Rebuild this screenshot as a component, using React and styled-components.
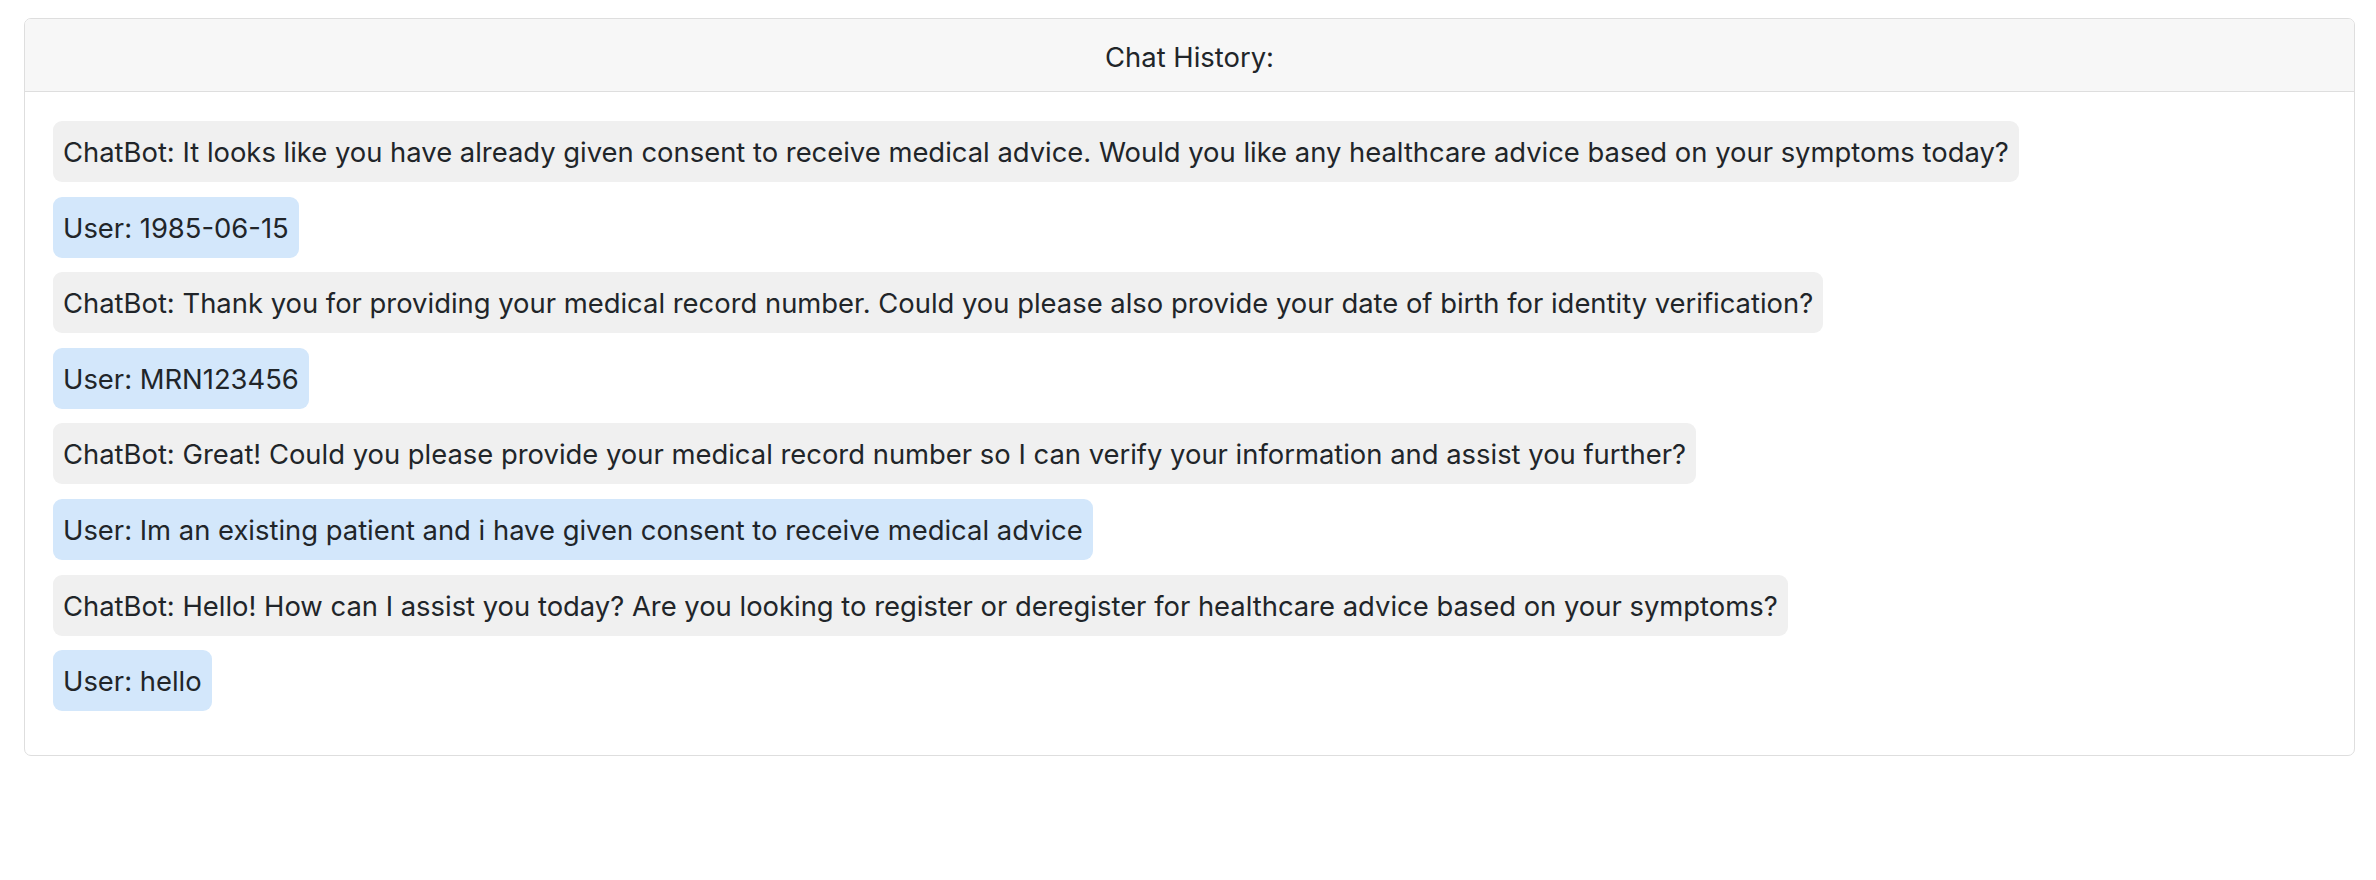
import React from "react";
import styled, { createGlobalStyle } from "styled-components";

const GlobalStyle = createGlobalStyle`
  body {
    margin: 0;
    background: #ffffff;
    font-family: "Inter", "Liberation Sans", sans-serif;
    color: #212529;
  }
`;

const Page = styled.div`
  padding: 18px 21px 0 24px;
`;

const Card = styled.div`
  border: 1px solid #dedede;
  border-radius: 7px;
  overflow: hidden;
  background: #ffffff;
`;

const CardHeader = styled.div`
  height: 73px;
  display: flex;
  align-items: center;
  justify-content: center;
  background: #f7f7f7;
  border-bottom: 1px solid #dedede;
  font-size: 27.4px;
  padding-top: 3px;
  box-sizing: border-box;
`;

const CardBody = styled.div`
  display: flex;
  flex-direction: column;
  align-items: flex-start;
  gap: 14.6px;
  padding: 29px 28px 44px;
`;

const Bubble = styled.div`
  height: 61px;
  display: flex;
  align-items: center;
  box-sizing: border-box;
  padding: 1px 10px 0;
  border-radius: 9px;
  font-size: 27.4px;
  white-space: nowrap;
  background: ${(props) => (props.sender === "User" ? "#d3e7fb" : "#f0f0f0")};
`;

const messages = [
  { sender: "ChatBot", text: "It looks like you have already given consent to receive medical advice. Would you like any healthcare advice based on your symptoms today?" },
  { sender: "User", text: "1985-06-15" },
  { sender: "ChatBot", text: "Thank you for providing your medical record number. Could you please also provide your date of birth for identity verification?" },
  { sender: "User", text: "MRN123456" },
  { sender: "ChatBot", text: "Great! Could you please provide your medical record number so I can verify your information and assist you further?" },
  { sender: "User", text: "Im an existing patient and i have given consent to receive medical advice" },
  { sender: "ChatBot", text: "Hello! How can I assist you today? Are you looking to register or deregister for healthcare advice based on your symptoms?" },
  { sender: "User", text: "hello" },
];

const App = () => {
  return (
    <Page>
      <GlobalStyle />
      <Card>
        <CardHeader>Chat History:</CardHeader>
        <CardBody>
          {messages.map((msg, index) => (
            <Bubble key={index} sender={msg.sender}>
              {msg.sender}: {msg.text}
            </Bubble>
          ))}
        </CardBody>
      </Card>
    </Page>
  );
};

export default App;
